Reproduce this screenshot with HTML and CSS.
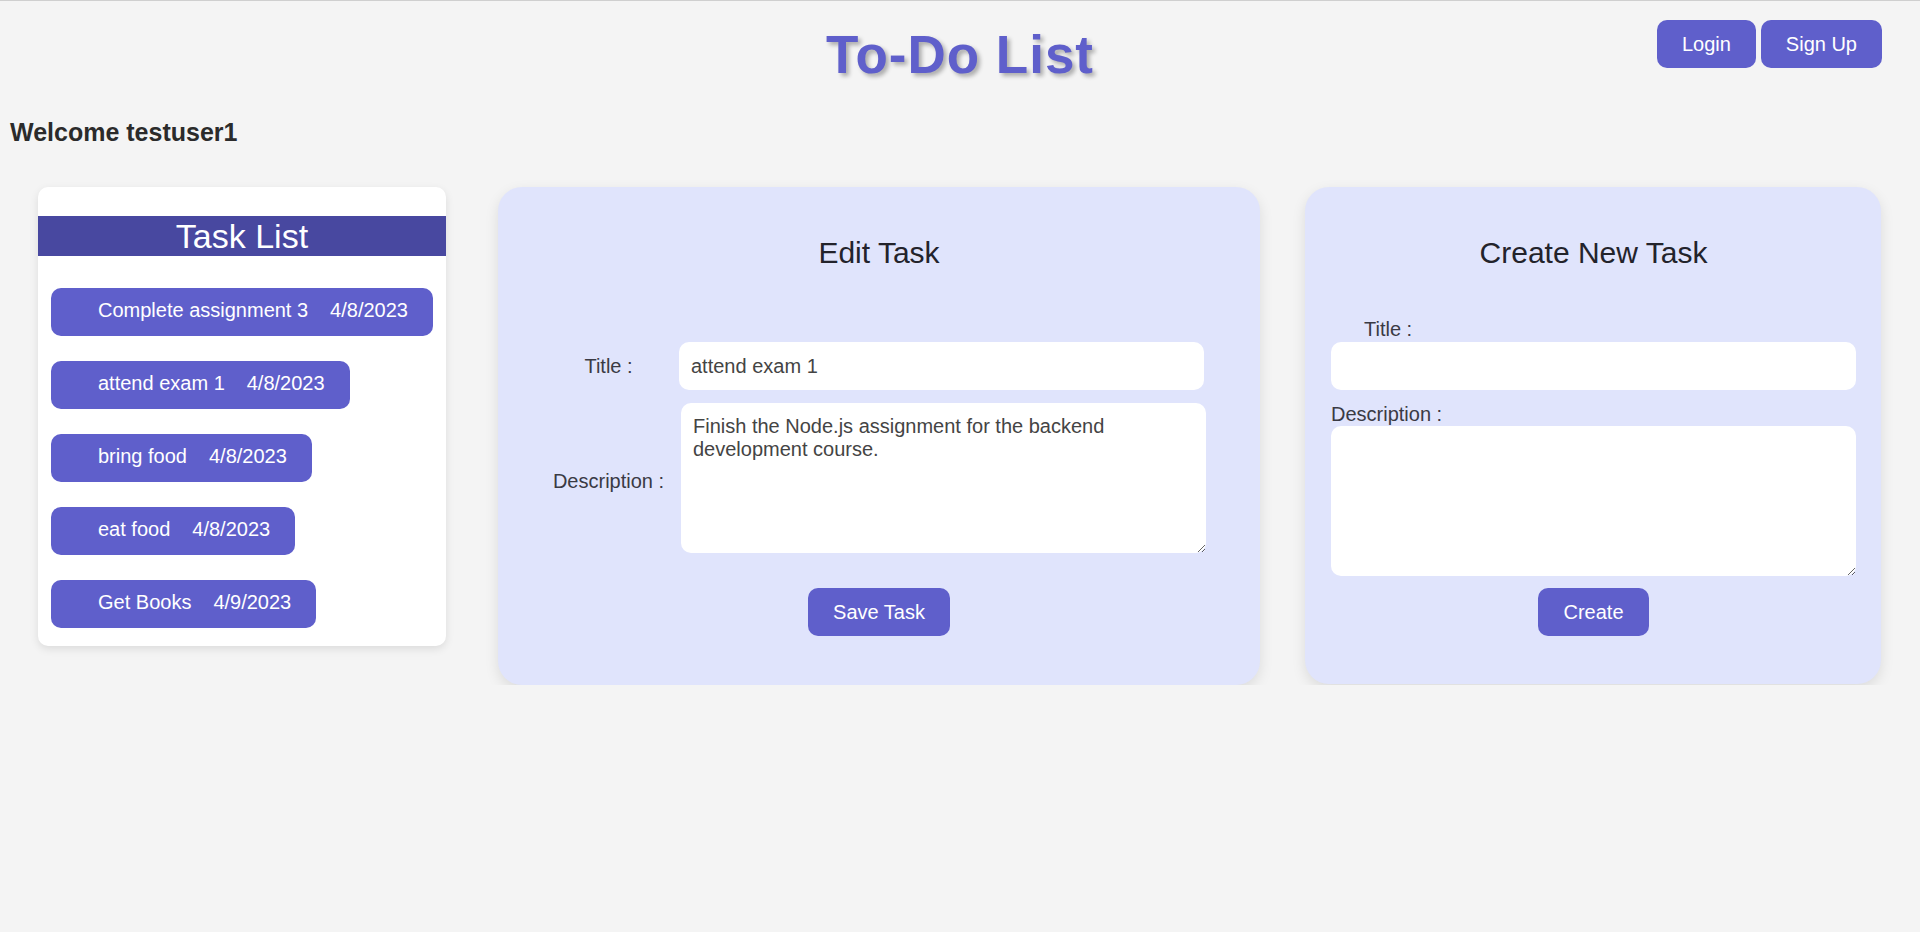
FILE: index.html
```html
<!DOCTYPE html>
<html lang="en">
<head>
<meta charset="utf-8">
<title>To-Do List</title>
<link rel="stylesheet" href="styles.css">
</head>
<body>
  <header class="header">
    <div class="header-spacer"></div>
    <h1 class="app-title">To-Do List</h1>
    <div class="auth">
      <button class="btn">Login</button>
      <button class="btn">Sign Up</button>
    </div>
  </header>

  <h2 class="welcome">Welcome testuser1</h2>

  <main class="board">
    <section class="task-card">
      <h2 class="task-card-title">Task List</h2>
      <ul class="task-list">
        <li class="task-item"><span>Complete assignment 3</span><span>4/8/2023</span></li>
        <li class="task-item"><span>attend exam 1</span><span>4/8/2023</span></li>
        <li class="task-item"><span>bring food</span><span>4/8/2023</span></li>
        <li class="task-item"><span>eat food</span><span>4/8/2023</span></li>
        <li class="task-item"><span>Get Books</span><span>4/9/2023</span></li>
      </ul>
    </section>

    <section class="panel panel-edit">
      <h2 class="panel-title">Edit Task</h2>
      <div class="edit-grid">
        <label class="edit-label" for="et">Title :</label>
        <input class="field" id="et" type="text" value="attend exam 1">
        <label class="edit-label edit-label-desc" for="ed">Description :</label>
        <textarea class="area area-edit" id="ed">Finish the Node.js assignment for the backend development course.</textarea>
      </div>
      <div class="actions"><button class="btn">Save Task</button></div>
    </section>

    <section class="panel panel-create">
      <h2 class="panel-title">Create New Task</h2>
      <label class="create-label create-label-title" for="ct">Title :</label>
      <input class="field field-create" id="ct" type="text">
      <label class="create-label create-label-desc" for="cd">Description :</label>
      <textarea class="area area-create" id="cd"></textarea>
      <div class="actions actions-create"><button class="btn">Create</button></div>
    </section>
  </main>
</body>
</html>
```

FILE: styles.css
```css
html {
  border-top: 1px solid #cfcfcf;
  background: #f4f4f4;
}

body {
  margin: 8px;
  font-family: "Liberation Sans", Arial, sans-serif;
  color: #222;
  background: #f4f4f4;
}

.header {
  display: grid;
  grid-template-columns: 1fr auto 1fr;
  align-items: start;
}

.app-title {
  margin: 15px 0 0;
  font-size: 53px;
  line-height: 61px;
  font-weight: bold;
  letter-spacing: 1px;
  color: #5f5fcb;
  text-shadow: 3px 3px 4px rgba(0, 0, 0, 0.3);
  text-align: center;
}

.auth {
  justify-self: end;
  display: flex;
  gap: 5px;
  margin: 11px 30px 0 0;
}

.btn {
  font-family: "Liberation Sans", Arial, sans-serif;
  font-size: 20px;
  line-height: 23px;
  padding: 12.5px 25px;
  border: none;
  border-radius: 10px;
  background: #5f5fcb;
  color: #fff;
  cursor: pointer;
}

.welcome {
  margin: 33px 0 0 2px;
  font-size: 25px;
  line-height: 28px;
  font-weight: bold;
  color: #2b2b2b;
}

.board {
  display: flex;
  align-items: flex-start;
  margin-top: 41px;
  padding-left: 30px;
}

/* Task list card */
.task-card {
  width: 408px;
  box-sizing: border-box;
  background: #fff;
  border-radius: 10px;
  box-shadow: 0 3px 8px rgba(0, 0, 0, 0.1);
  padding: 29px 0 18px;
}

.task-card-title {
  margin: 0;
  background: #4848a0;
  color: #fff;
  font-size: 34px;
  line-height: 40px;
  font-weight: normal;
  text-align: center;
}

.task-list {
  list-style: none;
  margin: 32px 0 0;
  padding: 0 0 0 13px;
  display: flex;
  flex-direction: column;
  align-items: flex-start;
  gap: 25px;
}

.task-item {
  display: flex;
  gap: 22px;
  height: 48px;
  box-sizing: border-box;
  padding: 11px 25px 14px 47px;
  border-radius: 10px;
  background: #5f5fcb;
  color: #fff;
  font-size: 20px;
  line-height: 23px;
  white-space: nowrap;
}

/* Panels */
.panel {
  box-sizing: border-box;
  background: #e0e4fc;
  border-radius: 24px;
  box-shadow: 0 5px 14px rgba(0, 0, 0, 0.1);
  padding-top: 49px;
}

.panel-edit {
  width: 762px;
  margin-left: 52px;
  padding-bottom: 49px;
}

.panel-create {
  width: 576px;
  margin-left: 45px;
  padding: 49px 25px 48px 26px;
  display: flex;
  flex-direction: column;
  align-items: flex-start;
}

.panel-title {
  margin: 0;
  font-size: 30px;
  line-height: 34px;
  font-weight: normal;
  color: #23232b;
  text-align: center;
  align-self: stretch;
}

.edit-grid {
  display: grid;
  grid-template-columns: 141px 525px;
  row-gap: 13px;
  align-items: center;
  margin-top: 72px;
  padding-left: 40px;
}

.edit-label {
  text-align: center;
  font-size: 20px;
  line-height: 23px;
  color: #3a3a44;
}

.edit-label-desc {
  padding-top: 6px;
}

.field {
  box-sizing: border-box;
  width: 525px;
  height: 48px;
  border: none;
  border-radius: 10px;
  background: #fff;
  padding: 0 12px;
  font-family: "Liberation Sans", Arial, sans-serif;
  font-size: 20px;
  color: #444;
  outline: none;
}

.area {
  box-sizing: border-box;
  width: 525px;
  height: 150px;
  border: none;
  border-radius: 10px;
  background: #fff;
  padding: 12px 12px;
  font-family: "Liberation Sans", Arial, sans-serif;
  font-size: 20px;
  line-height: 23px;
  color: #444;
  outline: none;
  display: block;
}

.area-edit {
  margin-left: 2px;
}

.actions {
  display: flex;
  justify-content: center;
  margin-top: 35px;
}

.actions-create {
  margin-top: 12px;
  align-self: stretch;
}

.create-label {
  font-size: 20px;
  line-height: 23px;
  color: #3a3a44;
}

.create-label-title {
  margin: 48px 0 1px 33px;
}

.create-label-desc {
  margin-top: 13px;
}
```
